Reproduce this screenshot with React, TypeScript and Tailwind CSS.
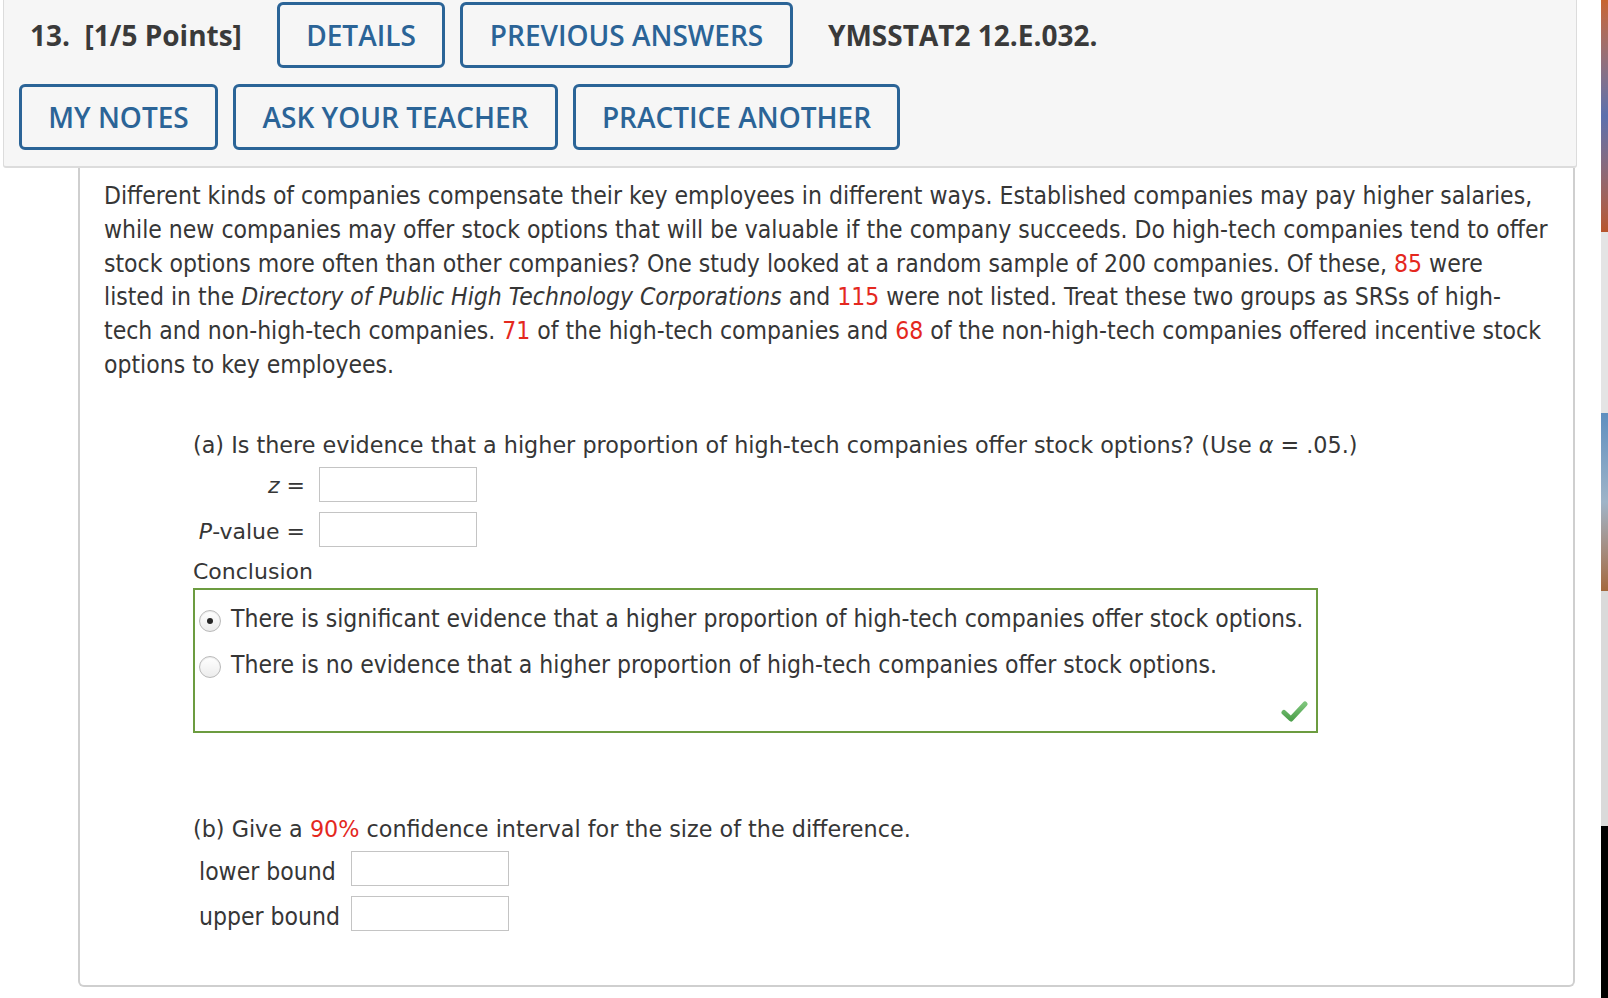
import React from "react";

const red = "text-[#e4281e]";

const HeaderButton = ({ label, width }: { label: string; width: string }) => (
  <button
    className={`${width} h-[66px] shrink-0 rounded-[6px] border-[3px] border-[#2b6497] text-[28px] font-semibold text-[#2b6497] flex items-center justify-center`}
    style={{ fontFamily: '"Open Sans", sans-serif' }}
  >
    {label}
  </button>
);

const AnswerBox = ({ width }: { width: string }) => (
  <div className={`${width} h-[35px] shrink-0 border border-[#c4c4c4] bg-white`} />
);

const Radio = ({ checked }: { checked?: boolean }) => (
  <span className="mt-[3px] w-[22px] h-[22px] shrink-0 rounded-full border border-[#b9b9b9] bg-gradient-to-b from-white to-[#ececec] flex items-center justify-center shadow-[inset_0_1px_1px_rgba(0,0,0,0.08)]">
    {checked && <span className="w-[6px] h-[6px] rounded-full bg-[#262626]" />}
  </span>
);

const CheckMark = () => (
  <svg width="27" height="23" viewBox="0 0 27 23">
    <defs>
      <linearGradient id="chk" x1="0" y1="0" x2="0" y2="1">
        <stop offset="0" stopColor="#7cc47a" />
        <stop offset="1" stopColor="#4fa14d" />
      </linearGradient>
    </defs>
    <path
      d="M3 12.5 L10 19 L24 4"
      fill="none"
      stroke="url(#chk)"
      strokeWidth="5"
      strokeLinecap="round"
      strokeLinejoin="round"
    />
  </svg>
);

export default function App() {
  const body = { fontFamily: '"DejaVu Sans Condensed", "DejaVu Sans", sans-serif' };
  const wide = { fontFamily: '"DejaVu Sans", Verdana, sans-serif' };

  return (
    <div className="flex w-[1608px] h-[998px] bg-white overflow-hidden">
      <div className="w-[1601px] flex flex-col">
        {/* Question header */}
        <div className="ml-[3px] w-[1574px] h-[168px] shrink-0 bg-[#f6f6f6] border border-t-0 border-b-2 border-[#dcdcdc] rounded-b-[3px] pt-[2px]">
          <div className="flex items-center gap-[15px] pl-[26px]">
            <span
              className="w-[232px] text-[28px] font-bold text-[#3a3a3a]"
              style={{ fontFamily: '"Open Sans", sans-serif' }}
            >
              13.&nbsp; [1/5 Points]
            </span>
            <HeaderButton label="DETAILS" width="w-[168px]" />
            <HeaderButton label="PREVIOUS ANSWERS" width="w-[333px]" />
            <span
              className="ml-[20px] text-[28px] font-bold text-[#3a3a3a]"
              style={{ fontFamily: '"Open Sans", sans-serif' }}
            >
              YMSSTAT2 12.E.032.
            </span>
          </div>
          <div className="flex items-center gap-[15px] pl-[15px] mt-[16px]">
            <HeaderButton label="MY NOTES" width="w-[199px]" />
            <HeaderButton label="ASK YOUR TEACHER" width="w-[325px]" />
            <HeaderButton label="PRACTICE ANOTHER" width="w-[327px]" />
          </div>
        </div>

        {/* Question body */}
        <div className="ml-[78px] w-[1497px] h-[819px] shrink-0 border-2 border-t-0 border-[#cfcfcf] rounded-b-[6px] pl-[24px] pt-[11px] text-[#363636]">
          <p className="text-[24.5px] leading-[33.8px] whitespace-nowrap" style={body}>
            Different kinds of companies compensate their key employees in different ways. Established companies may pay higher salaries,
            <br />
            while new companies may offer stock options that will be valuable if the company succeeds. Do high-tech companies tend to offer
            <br />
            stock options more often than other companies? One study looked at a random sample of 200 companies. Of these,{" "}
            <span className={red}>85</span> were
            <br />
            listed in the <i>Directory of Public High Technology Corporations</i> and <span className={red}>115</span> were not
            listed. Treat these two groups as SRSs of high-
            <br />
            tech and non-high-tech companies. <span className={red}>71</span> of the high-tech companies and{" "}
            <span className={red}>68</span> of the non-high-tech companies offered incentive stock
            <br />
            options to key employees.
          </p>

          {/* Part (a) */}
          <div className="ml-[89px] mt-[48px] w-[1125px]">
            <div className="text-[22.3px] leading-[30px] whitespace-nowrap" style={wide}>
              (a) Is there evidence that a higher proportion of high-tech companies offer stock options? (Use{" "}
              <i>α</i> = .05.)
            </div>
            <div className="mt-[7px] flex flex-col gap-[10px] text-[22px] leading-[30px]" style={wide}>
              <div className="flex items-center gap-[14px]">
                <span className="w-[112px] pt-[4px] text-right whitespace-nowrap">
                  <i>z</i> =
                </span>
                <AnswerBox width="w-[158px]" />
              </div>
              <div className="flex items-center gap-[14px]">
                <span className="w-[112px] pt-[5px] text-right whitespace-nowrap">
                  <i>P</i>-value =
                </span>
                <AnswerBox width="w-[158px]" />
              </div>
            </div>
            <div className="mt-[10px] text-[22px] leading-[30px]" style={wide}>
              Conclusion
            </div>
            <div className="mt-[1px] h-[145px] border-2 border-[#6c9c40] flex flex-col pl-[4px] pt-[16px]">
              <label className="flex items-center gap-[10px] h-[28px] text-[24.5px] whitespace-nowrap" style={body}>
                <Radio checked />
                There is significant evidence that a higher proportion of high-tech companies offer stock options.
              </label>
              <label className="mt-[18px] flex items-center gap-[10px] h-[28px] text-[24.5px] whitespace-nowrap" style={body}>
                <Radio />
                There is no evidence that a higher proportion of high-tech companies offer stock options.
              </label>
              <div className="mt-auto mb-[8px] mr-[8px] self-end">
                <CheckMark />
              </div>
            </div>

            {/* Part (b) */}
            <div className="mt-[81px] text-[22.3px] leading-[30px] whitespace-nowrap" style={wide}>
              (b) Give a <span className={red}>90%</span> confidence interval for the size of the difference.
            </div>
            <div className="mt-[6px] ml-[6px] flex flex-col gap-[8px] text-[24.5px] leading-[30px]" style={body}>
              <div className="flex items-center">
                <span className="w-[152px] pt-[7px] whitespace-nowrap">lower bound</span>
                <AnswerBox width="w-[158px]" />
              </div>
              <div className="flex items-center">
                <span className="w-[152px] pt-[7px] whitespace-nowrap">upper bound</span>
                <AnswerBox width="w-[158px]" />
              </div>
            </div>
          </div>
        </div>
      </div>

      {/* Desktop peeking in at the right edge */}
      <div className="w-[7px] flex flex-col">
        <div className="h-[232px] bg-gradient-to-b from-[#c8642e] via-[#5b70ad] to-[#b8552b]" />
        <div className="h-[181px] bg-[#e4e4e4]" />
        <div className="h-[178px] bg-gradient-to-b from-[#5e8fbf] via-[#9fb4c8] to-[#a3683d]" />
        <div className="h-[235px] bg-[#dadada]" />
        <div className="flex-1 bg-black" />
      </div>
    </div>
  );
}
